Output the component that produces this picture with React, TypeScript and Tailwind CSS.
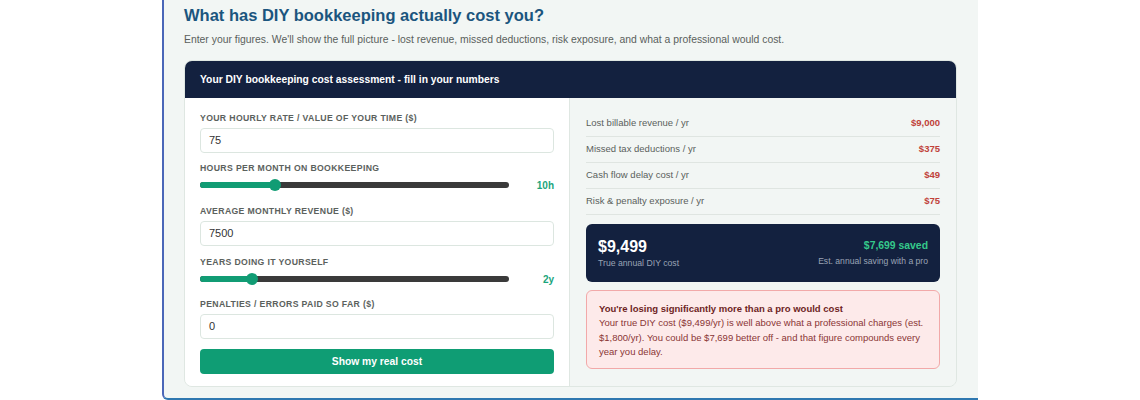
import React from 'react'

const font = { fontFamily: '"Liberation Sans", Arial, sans-serif' }

function Label({ children }: { children: React.ReactNode }) {
    return (
        <div className="text-[8.7px] leading-[12px] font-bold uppercase tracking-[0.04em] text-[#5b615d]">
            {children}
        </div>
    )
}

function NumberInput({ value }: { value: string }) {
    return (
        <div className="mt-1 h-[25px] flex items-center px-2 border border-[#dce6e0] rounded-[4px] bg-white text-[11px] text-[#333]">
            {value}
        </div>
    )
}

function Slider({ pct, value }: { pct: number; value: string }) {
    return (
        <div className="mt-1 h-[14px] flex items-center">
            <div className="relative w-[309px] h-[6px] rounded-full bg-[#3a3a3a]">
                <div className="h-full rounded-full bg-[#119c74]" style={{ width: `${pct}%` }} />
                <div
                    className="absolute top-1/2 w-[12px] h-[12px] -mt-[6px] -ml-[6px] rounded-full bg-[#119c74]"
                    style={{ left: `${pct}%` }}
                />
            </div>
            <div className="flex-1 text-right text-[10px] font-bold text-[#1ba57c]">{value}</div>
        </div>
    )
}

const rows = [
    { label: 'Lost billable revenue / yr', value: '$9,000' },
    { label: 'Missed tax deductions / yr', value: '$375' },
    { label: 'Cash flow delay cost / yr', value: '$49' },
    { label: 'Risk & penalty exposure / yr', value: '$75' },
]

export default function App() {
    return (
        <div className="w-[1140px] h-[400px] bg-white overflow-hidden" style={font}>
            <div className="ml-[162px] w-[816px] h-[400px] bg-[#f2f6f4] border-l-2 border-b-2 border-l-[#4b67b8] border-b-[#2f78b0] rounded-bl-[6px] pl-[20px] pr-[20px] pt-[5px]">
                <h1 className="text-[16.5px] leading-[20px] font-bold text-[#1b557e]">
                    What has DIY bookkeeping actually cost you?
                </h1>
                <p className="mt-[8px] text-[10.4px] leading-[14px] text-[#5a5f5c]">
                    Enter your figures. We'll show the full picture - lost revenue, missed deductions, risk exposure, and what a professional would cost.
                </p>

                <div className="mt-[13px] w-[773px] border border-[#dfe7e2] rounded-[8px] overflow-hidden">
                    <div className="h-[37px] bg-[#13213f] flex items-center px-[15px] text-[10.3px] font-bold text-white">
                        Your DIY bookkeeping cost assessment - fill in your numbers
                    </div>
                    <div className="flex">
                        <div className="w-[384px] bg-white px-[15px] pt-[14px] pb-[12px] flex flex-col">
                            <Label>Your hourly rate / value of your time ($)</Label>
                            <NumberInput value="75" />

                            <div className="mt-[9px]">
                                <Label>Hours per month on bookkeeping</Label>
                                <Slider pct={24.3} value="10h" />
                            </div>

                            <div className="mt-[13px]">
                                <Label>Average monthly revenue ($)</Label>
                                <NumberInput value="7500" />
                            </div>

                            <div className="mt-[10px]">
                                <Label>Years doing it yourself</Label>
                                <Slider pct={16.8} value="2y" />
                            </div>

                            <div className="mt-[12px]">
                                <Label>Penalties / errors paid so far ($)</Label>
                                <NumberInput value="0" />
                            </div>

                            <button className="mt-[10px] h-[25px] rounded-[4px] bg-[#0f9d74] text-white text-[10.3px] font-bold">
                                Show my real cost
                            </button>
                        </div>

                        <div className="flex-1 bg-[#f2f6f4] border-l border-[#dfe7e2] px-[16px] pt-[13px]">
                            {rows.map((r) => (
                                <div
                                    key={r.label}
                                    className="h-[26px] flex items-center justify-between border-b border-[#dfe5e1] text-[9.5px]"
                                >
                                    <span className="text-[#5a5f5c]">{r.label}</span>
                                    <span className="font-bold text-[#c0423a]">{r.value}</span>
                                </div>
                            ))}

                            <div className="mt-[9px] h-[58px] rounded-[6px] bg-[#13213f] px-[12px] flex items-center justify-between">
                                <div>
                                    <div className="text-[16px] leading-[18px] font-bold text-white">$9,499</div>
                                    <div className="mt-[2px] text-[8.7px] leading-[11px] text-[#9aa3b5]">True annual DIY cost</div>
                                </div>
                                <div className="text-right">
                                    <div className="text-[10.4px] leading-[14px] font-bold text-[#35c98b]">$7,699 saved</div>
                                    <div className="mt-[3px] text-[8.6px] leading-[11px] text-[#9aa3b5]">Est. annual saving with a pro</div>
                                </div>
                            </div>

                            <div className="mt-[8px] h-[79px] rounded-[6px] bg-[#fdeaea] border border-[#f2a9a9] px-[12px] pt-[11px]">
                                <div className="text-[9.5px] leading-[14px] font-bold text-[#6e1f1f]">
                                    You're losing significantly more than a pro would cost
                                </div>
                                <div className="text-[9.5px] leading-[14.5px] text-[#8a3535]">
                                    Your true DIY cost ($9,499/yr) is well above what a professional charges (est. $1,800/yr). You could be $7,699 better off - and that figure compounds every year you delay.
                                </div>
                            </div>
                        </div>
                    </div>
                </div>
            </div>
        </div>
    )
}
